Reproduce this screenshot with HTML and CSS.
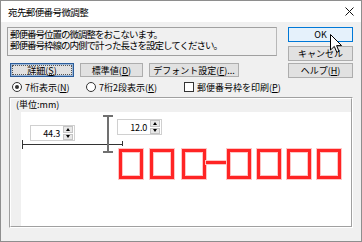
FILE: index.html
```html
<!DOCTYPE html>
<html lang="ja">
<head>
<meta charset="utf-8">
<link rel="stylesheet" href="styles.css">
</head>
<body>
<div class="window">
  <div class="titlebar">
    <span class="title">宛先郵便番号微調整</span>
    <svg class="close" width="9" height="9" viewBox="0 0 9 9"><path d="M0.5 0.5L8.5 8.5M8.5 0.5L0.5 8.5" stroke="#111" stroke-width="1"/></svg>
  </div>
  <div class="body">
    <div class="top">
      <div class="left">
        <div class="message">
          <div>郵便番号位置の微調整をおこないます。</div>
          <div>郵便番号枠線の内側で計った長さを設定してください。</div>
        </div>
        <div class="btnrow">
          <div class="btn focus w-detail">詳細(<u>S</u>)</div>
          <div class="btn w-std">標準値(<u>D</u>)</div>
          <div class="btn w-font">デフォント設定(<u>F</u>)...</div>
        </div>
      </div>
      <div class="right">
        <div class="btn default">OK</div>
        <div class="btn cancel">キャンセル</div>
        <div class="btn help">ヘルプ(<u>H</u>)</div>
      </div>
    </div>
    <div class="options">
      <div class="opt opt1"><span class="radio checked"></span><span>7桁表示(<u>N</u>)</span></div>
      <div class="opt opt2"><span class="radio"></span><span>7桁2段表示(<u>K</u>)</span></div>
      <div class="opt"><span class="check"></span><span>郵便番号枠を印刷(<u>P</u>)</span></div>
    </div>
    <div class="group">
      <div class="group-inner">
        <div class="group-label">(単位:mm)</div>
        <div class="canvas">
          <div class="hline"></div>
          <div class="htick htick-l"></div>
          <div class="htick htick-r"></div>
          <div class="vline"></div>
          <div class="vtick vtick-t"></div>
          <div class="vtick vtick-b"></div>
          <div class="spin spin1">
            <span class="spin-val">44.3</span>
            <span class="spin-btns"><span class="spin-btn up"></span><span class="spin-btn down"></span></span>
          </div>
          <div class="spin spin2">
            <span class="spin-val">12.0</span>
            <span class="spin-btns"><span class="spin-btn up"></span><span class="spin-btn down"></span></span>
          </div>
          <div class="rbox b1"></div>
          <div class="rbox b2"></div>
          <div class="rbox b3"></div>
          <div class="rdash"></div>
          <div class="rbox b4"></div>
          <div class="rbox b5"></div>
          <div class="rbox b6"></div>
          <div class="rbox b7"></div>
        </div>
      </div>
    </div>
  </div>
  <svg class="cursor" width="13" height="20" viewBox="0 0 13 20"><path d="M0.5 0.5 L0.5 16 L4.3 12.4 L6.8 18.3 L9 17.3 L6.6 11.6 L11.6 11.6 Z" fill="#fff" stroke="#000" stroke-width="1" stroke-linejoin="miter"/></svg>
</div>
</body>
</html>
```
FILE: styles.css
```css
* { box-sizing: border-box; }
html, body { margin: 0; padding: 0; }
body {
  font-family: "Noto Sans CJK JP", "Noto Sans", sans-serif;
  font-size: 9px;
  color: #000;
  background: #f0f0f0;
}
u { text-decoration: underline; text-underline-offset: 1px; }

.window {
  position: relative;
  width: 362px;
  height: 242px;
  border: 1px solid #8e8e8e;
  background: #f0f0f0;
  display: flex;
  flex-direction: column;
  overflow: hidden;
}

.titlebar {
  height: 21px;
  background: #fff;
  display: flex;
  align-items: center;
  padding-left: 7px;
  flex: none;
}
.title { font-size: 9.5px; letter-spacing: -0.6px; }
.close { margin-left: auto; margin-right: 7px; }

.body { flex: 1; display: flex; flex-direction: column; }

.top { display: flex; padding: 5px 0 0 6px; }
.left { width: 270px; }
.message {
  height: 29px;
  border: 1px solid #a0a0a0;
  border-right-color: #b8b8b8;
  padding: 1px 0 0 2px;
  line-height: 11px;
  font-size: 9.5px;
  letter-spacing: -1px;
  white-space: nowrap;
  overflow: hidden;
}
.btnrow { display: flex; gap: 6px; margin-top: 7px; padding-left: 3px; }

.btn {
  position: relative;
  height: 14px;
  background: #e1e1e1;
  border: 1px solid #adadad;
  display: flex;
  align-items: center;
  justify-content: center;
  font-size: 9px;
  white-space: nowrap;
  line-height: 1;
}
.w-detail { width: 64px; }
.w-std { width: 63px; }
.w-font { width: 90px; }
.btn.focus { border-color: #2b5d9b; box-shadow: inset 0 0 0 1px #9bb6d6; }
.btn.focus::after {
  content: "";
  position: absolute;
  inset: 1px;
  border: 1px dotted #555;
}

.right { margin-left: 11px; width: 65px; display: flex; flex-direction: column; }
.right .btn { height: 15px; }
.btn.default { background: #e5f1fb; border-color: #0078d7; }
.btn.cancel { margin-top: 4px; }
.btn.help { margin-top: 2px; }

.options { display: flex; align-items: center; height: 12px; margin-top: 3px; padding-left: 11px; }
.opt { display: flex; align-items: center; gap: 3px; white-space: nowrap; }
.opt1 { width: 74px; }
.opt2 { width: 98px; }
.radio {
  width: 10px; height: 10px; border-radius: 50%;
  border: 1px solid #333; background: #fff;
  display: flex; align-items: center; justify-content: center;
}
.radio.checked::after { content: ""; width: 4px; height: 4px; border-radius: 50%; background: #333; }
.check { width: 10px; height: 10px; border: 1px solid #333; background: #fff; }

.group {
  margin: 4px 0 0 8px;
  width: 344px;
  height: 131px;
  border: 1px solid;
  border-color: #a0a0a0 #fff #fff #a0a0a0;
}
.group-inner {
  height: 100%;
  border: 1px solid;
  border-color: #fff #a0a0a0 #a0a0a0 #fff;
  display: flex;
  flex-direction: column;
}
.group-label { height: 13px; padding-left: 5px; line-height: 12px; font-size: 9px; }
.canvas { position: relative; flex: 1; margin-left: 10px; background: #fff; }

.hline { position: absolute; left: 1px; top: 32px; width: 101px; height: 1px; background: #333; }
.htick { position: absolute; top: 28px; width: 1px; height: 9px; background: #333; }
.htick-l { left: 1px; }
.htick-r { left: 101px; top: 29px; height: 5px; }
.vline { position: absolute; left: 86px; top: 3px; width: 2px; height: 38px; background: #707070; }
.vtick { position: absolute; left: 82px; width: 10px; height: 2px; background: #707070; }
.vtick-t { top: 3px; }
.vtick-b { top: 39px; }

.spin {
  position: absolute;
  width: 45px; height: 16px;
  border: 1px solid #d0d0d0;
  background: #fff;
  display: flex;
  align-items: center;
}
.spin1 { left: 9px; top: 13px; }
.spin2 { left: 96px; top: 7px; }
.spin-val { flex: 1; text-align: right; padding-right: 3px; font-size: 9px; letter-spacing: -0.2px; }
.spin-btns { width: 10px; height: 14px; display: flex; flex-direction: column; gap: 1px; margin-right: 1px; }
.spin-btn {
  flex: 1; background: #e8e8e8; border: 1px solid #c4c4c4;
  display: flex; align-items: center; justify-content: center;
}
.spin-btn.up::after { content: ""; border-left: 2.5px solid transparent; border-right: 2.5px solid transparent; border-bottom: 3px solid #000; }
.spin-btn.down::after { content: ""; border-left: 2.5px solid transparent; border-right: 2.5px solid transparent; border-top: 3px solid #000; }

.rbox {
  position: absolute;
  top: 37px;
  width: 24px; height: 30px;
  border: 3px solid #ff2424;
  box-shadow: 0 0 0 1px #ffc4c4, inset 0 0 0 1px #ffc4c4;
}
.b1 { left: 98px; }
.b2 { left: 129px; }
.b3 { left: 161px; }
.b4 { left: 206px; }
.b5 { left: 236px; }
.b6 { left: 266px; }
.b7 { left: 296px; }
.rdash {
  position: absolute; left: 185px; top: 49px; width: 21px; height: 3px;
  background: #ff2424; box-shadow: 0 0 0 1px #ffc4c4;
}

.cursor { position: absolute; left: 329px; top: 33px; }
```
